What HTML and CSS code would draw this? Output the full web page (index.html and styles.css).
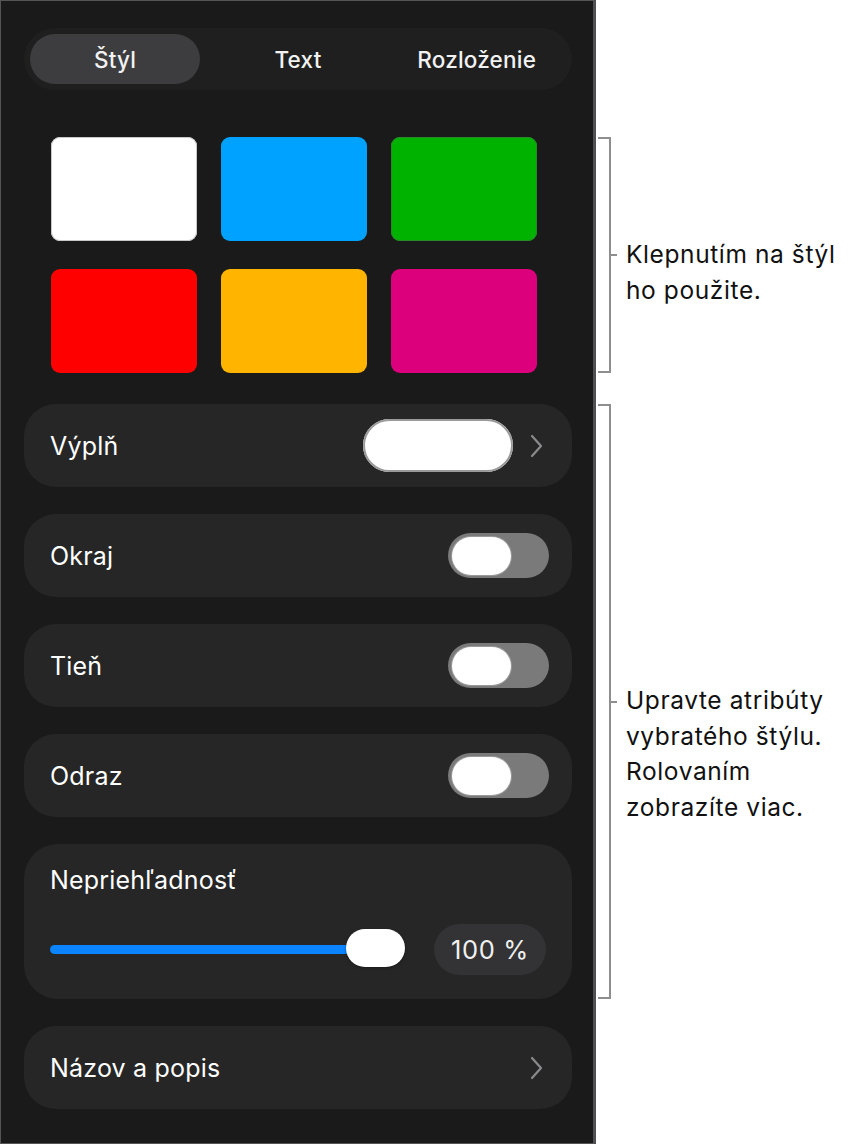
FILE: index.html
```html
<!DOCTYPE html>
<html lang="sk">
<head>
<meta charset="utf-8">
<title>Štýl</title>
<link rel="stylesheet" href="styles.css">
</head>
<body>
<div class="page">
  <aside class="panel">
    <div class="seg">
      <div class="seg-item active">Štýl</div>
      <div class="seg-item">Text</div>
      <div class="seg-item">Rozloženie</div>
    </div>

    <div class="swatches">
      <div class="swatch sw-white"></div>
      <div class="swatch sw-blue"></div>
      <div class="swatch sw-green"></div>
      <div class="swatch sw-red"></div>
      <div class="swatch sw-yellow"></div>
      <div class="swatch sw-magenta"></div>
    </div>

    <div class="rows">
      <div class="row row-fill">
        <span class="label">Výplň</span>
        <div class="row-right">
          <div class="fill-pill"></div>
          <svg class="chev" width="13" height="24" viewBox="0 0 13 24"><path d="M2 2 L11 12 L2 22" fill="none" stroke="#8a8a8c" stroke-width="2.2" stroke-linecap="round" stroke-linejoin="round"/></svg>
        </div>
      </div>
      <div class="row row-toggle">
        <span class="label">Okraj</span>
        <div class="toggle"><div class="knob"></div></div>
      </div>
      <div class="row row-toggle">
        <span class="label">Tieň</span>
        <div class="toggle"><div class="knob"></div></div>
      </div>
      <div class="row row-toggle">
        <span class="label">Odraz</span>
        <div class="toggle"><div class="knob"></div></div>
      </div>
      <div class="card">
        <span class="label">Nepriehľadnosť</span>
        <div class="slider-row">
          <div class="slider">
            <div class="track"></div>
            <div class="thumb"></div>
          </div>
          <div class="value">100 %</div>
        </div>
      </div>
      <div class="row row-link">
        <span class="label">Názov a popis</span>
        <svg class="chev" width="13" height="24" viewBox="0 0 13 24"><path d="M2 2 L11 12 L2 22" fill="none" stroke="#8a8a8c" stroke-width="2.2" stroke-linecap="round" stroke-linejoin="round"/></svg>
      </div>
    </div>
  </aside>

  <div class="notes">
    <div class="note note-1">
      <div class="bracket"></div>
      <p class="note-text">Klepnutím na štýl<br>ho použite.</p>
    </div>
    <div class="note note-2">
      <div class="bracket"></div>
      <p class="note-text">Upravte atribúty<br>vybratého štýlu.<br>Rolovaním<br>zobrazíte viac.</p>
    </div>
  </div>
</div>
</body>
</html>
```

FILE: styles.css
```css
* { box-sizing: border-box; }

html, body {
  margin: 0;
  padding: 0;
  background: #ffffff;
}

body {
  font-family: "Inter", "Roboto", "Noto Sans", sans-serif;
  -webkit-font-smoothing: antialiased;
}

.page {
  display: flex;
  align-items: flex-start;
  width: 859px;
  height: 1146px;
  overflow: hidden;
}

/* ---------- panel ---------- */
.panel {
  width: 596px;
  height: 1144px;
  flex: none;
  background: #1a1a1a;
  border: 1px solid #555557;
  border-right: 3px solid #505052;
  padding: 27px 21px 0 23px;
  color: #ffffff;
}

.seg {
  display: grid;
  grid-template-columns: 1fr 1fr 1fr;
  height: 62px;
  padding: 6px;
  border-radius: 31px;
  background: #1f1f20;
}

.seg-item {
  display: flex;
  align-items: center;
  justify-content: center;
  font-size: 22.5px;
  font-weight: 500;
  letter-spacing: 0.2px;
  color: #f2f2f2;
}

.seg-item.active {
  width: 170px;
  background: #3d3d3f;
  border-radius: 25px;
}

.swatches {
  display: grid;
  grid-template-columns: repeat(3, 146px);
  grid-auto-rows: 104px;
  column-gap: 24px;
  row-gap: 28px;
  margin: 47px 0 0 27px;
}

.swatch {
  border-radius: 9px;
}
.sw-white { background: #ffffff; box-shadow: inset 0 0 0 1px #c8c8c8; }
.sw-blue { background: #00a2ff; }
.sw-green { background: #00b200; box-shadow: inset 0 0 0 1px #2a8a2a; }
.sw-red { background: #ff0000; }
.sw-yellow { background: #ffb400; }
.sw-magenta { background: #dd007d; }

.rows {
  display: flex;
  flex-direction: column;
  gap: 27px;
  margin-top: 31px;
}

.row {
  display: flex;
  align-items: center;
  justify-content: space-between;
  height: 83px;
  padding: 0 23px 0 26px;
  background: #262627;
  border-radius: 32px;
}

.label {
  font-size: 25px;
  font-weight: 400;
  letter-spacing: 0.2px;
  color: #ffffff;
}

.row-fill { padding-right: 29px; }
.row-link { padding-right: 29px; }

.row-right {
  display: flex;
  align-items: center;
  gap: 17px;
}

.fill-pill {
  width: 150px;
  height: 53px;
  border-radius: 27px;
  background: #ffffff;
  box-shadow: inset 0 0 0 2px #9a9a9a;
}

.chev { display: block; }

.toggle {
  display: flex;
  align-items: center;
  width: 101px;
  height: 45px;
  padding: 0 4px;
  border-radius: 23px;
  background: #7a7a7a;
}

.knob {
  width: 59px;
  height: 38px;
  border-radius: 19px;
  background: #ffffff;
  box-shadow: 0 0 0 1px #9a9a9a;
}

.card {
  display: flex;
  flex-direction: column;
  height: 155px;
  padding: 21px 26px 0 26px;
  background: #262627;
  border-radius: 34px;
}

.card .label {
  line-height: 30px;
}

.slider-row {
  display: flex;
  align-items: center;
  gap: 29px;
  margin-top: 29px;
}

.slider {
  position: relative;
  display: flex;
  align-items: center;
  width: 355px;
  height: 51px;
}

.track {
  width: 310px;
  height: 9px;
  border-radius: 5px;
  background: #0a84ff;
}

.thumb {
  position: absolute;
  left: 296px;
  top: 5px;
  width: 59px;
  height: 38px;
  border-radius: 19px;
  background: #ffffff;
  box-shadow: 0 1px 3px rgba(0,0,0,0.35);
}

.value {
  display: flex;
  align-items: center;
  justify-content: center;
  width: 112px;
  height: 51px;
  border-radius: 26px;
  background: #333335;
  font-size: 25.5px;
  letter-spacing: 0.6px;
  color: #f0f0f0;
}

/* ---------- notes ---------- */
.notes {
  display: flex;
  flex-direction: column;
  padding-top: 137px;
  margin-left: 2px;
}

.note {
  display: flex;
  align-items: flex-start;
}

.note-1 { height: 236px; }
.note-2 { height: 595px; margin-top: 31px; }

.bracket {
  position: relative;
  width: 13px;
  height: 100%;
  border: 2px solid #8e8e8e;
  border-left: none;
  flex: none;
}

.bracket::after {
  content: "";
  position: absolute;
  left: 100%;
  top: calc(50% - 1px);
  width: 8px;
  height: 2px;
  background: #8e8e8e;
}

.note-text {
  margin: 0 0 0 15px;
  font-size: 24.5px;
  line-height: 35.5px;
  letter-spacing: 0.6px;
  color: #111111;
  white-space: nowrap;
}

.note-1 .note-text { padding-top: 100px; }
.note-2 .note-text { padding-top: 279px; }
```
